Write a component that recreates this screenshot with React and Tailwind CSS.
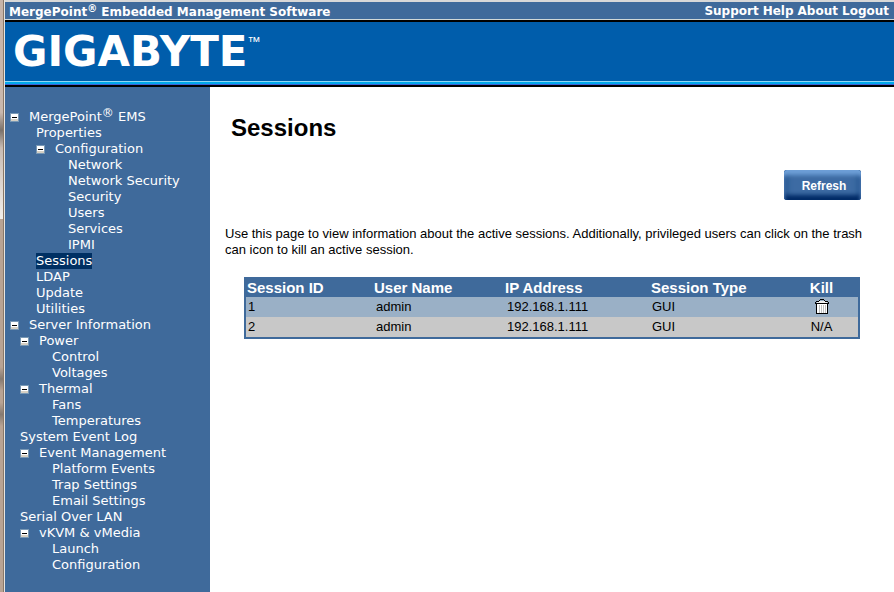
import { clsx } from 'clsx';

const topLinks = ['Support', 'Help', 'About', 'Logout'];

const reg = <sup className="relative -top-1 text-[12px] leading-none align-baseline">®</sup>;

// indent is the padding class for the row's depth in the tree
const menu = [
  { label: <>MergePoint{reg} EMS</>, indent: 'pl-[5px]', open: true },
  { label: 'Properties', indent: 'pl-[31px]' },
  { label: 'Configuration', indent: 'pl-[31px]', open: true },
  { label: 'Network', indent: 'pl-[63px]' },
  { label: 'Network Security', indent: 'pl-[63px]' },
  { label: 'Security', indent: 'pl-[63px]' },
  { label: 'Users', indent: 'pl-[63px]' },
  { label: 'Services', indent: 'pl-[63px]' },
  { label: 'IPMI', indent: 'pl-[63px]' },
  { label: 'Sessions', indent: 'pl-[31px]', active: true },
  { label: 'LDAP', indent: 'pl-[31px]' },
  { label: 'Update', indent: 'pl-[31px]' },
  { label: 'Utilities', indent: 'pl-[31px]' },
  { label: 'Server Information', indent: 'pl-[5px]', open: true },
  { label: 'Power', indent: 'pl-[15px]', open: true },
  { label: 'Control', indent: 'pl-[47px]' },
  { label: 'Voltages', indent: 'pl-[47px]' },
  { label: 'Thermal', indent: 'pl-[15px]', open: true },
  { label: 'Fans', indent: 'pl-[47px]' },
  { label: 'Temperatures', indent: 'pl-[47px]' },
  { label: 'System Event Log', indent: 'pl-[15px]' },
  { label: 'Event Management', indent: 'pl-[15px]', open: true },
  { label: 'Platform Events', indent: 'pl-[47px]' },
  { label: 'Trap Settings', indent: 'pl-[47px]' },
  { label: 'Email Settings', indent: 'pl-[47px]' },
  { label: 'Serial Over LAN', indent: 'pl-[15px]' },
  { label: 'vKVM & vMedia', indent: 'pl-[15px]', open: true },
  { label: 'Launch', indent: 'pl-[47px]' },
  { label: 'Configuration', indent: 'pl-[47px]' },
];

const sessions = [
  { id: 1, user: 'admin', ip: '192.168.1.111', type: 'GUI', canKill: true },
  { id: 2, user: 'admin', ip: '192.168.1.111', type: 'GUI', canKill: false },
];

function Toggle() {
  return (
    <button aria-label="Collapse" className="block shrink-0 mr-[10px]">
      <svg width="9" height="9" viewBox="0 0 9 9" shapeRendering="crispEdges">
        <rect width="9" height="9" fill="#7898b5" />
        <rect x="1" y="1" width="7" height="7" fill="#fff" />
        <path d="M1 6h7v2H1z" fill="#d6d0c4" />
        <path d="M2 4h5v1H2z" fill="#000" />
      </svg>
    </button>
  );
}

function TrashIcon() {
  return (
    <svg width="16" height="16" viewBox="0 0 16 16" shapeRendering="crispEdges">
      <path d="M2 5h12v10H2z" fill="#fff" />
      <path d="M5 6h1v8H5zM7 6h1v8H7zM9 6h1v8H9zM11 6h1v8h-1z" fill="#c0c0c0" />
      <path d="M3 2h10v2H3z" fill="#f0f0f0" />
      <path
        d="M6 0h4v1H6zM5 1h1v1H5zM10 1h1v1h-1zM2 2h3v1H2zM11 2h3v1h-3zM1 3h1v1H1zM14 3h1v1h-1zM1 4h14v1H1zM2 5h1v9H2zM13 5h1v9h-1zM2 14h12v1H2z"
        fill="#000"
      />
    </svg>
  );
}

function Header() {
  return (
    <header>
      <div className="flex h-[20px] items-center justify-between border-t-2 border-b border-t-[#d8d8d8] border-b-[#d0d8d8] bg-[#3f6a9b] pl-1 pr-[5px] font-['DejaVu_Sans',sans-serif] text-xs leading-4 font-bold whitespace-nowrap text-white">
        <div className="pt-[3px]">
          MergePoint<sup className="relative -top-1 text-[10px] leading-none align-baseline">®</sup> Embedded Management Software
        </div>
        <nav className="flex gap-1">
          {topLinks.map(link => (
            <a key={link} href="#">{link}</a>
          ))}
        </nav>
      </div>
      <div className="flex h-[61px] items-start border-t-2 border-black bg-[#005dab] pl-2 text-white">
        <span className="mt-[6px] font-['DejaVu_Sans',sans-serif] text-[42px] leading-[48px] font-bold">GIGABYTE</span>
        <span className="mt-[10px] font-['Liberation_Sans',sans-serif] text-[13px]">™</span>
      </div>
      <div className="h-px bg-[#8fd8f4]" />
      <div className="h-[2px] bg-[#00a8ea]" />
      <div className="h-px bg-[#3f62d8]" />
      <div className="h-[2px] bg-black" />
    </header>
  );
}

function Sidebar() {
  return (
    <nav className="w-[205px] shrink-0 bg-[#3f6a9b] pt-[22px] font-['DejaVu_Sans',sans-serif] text-[13px] leading-4 text-white">
      <ul>
        {menu.map((item, i) => (
          <li key={i} className={clsx('flex h-4 items-center whitespace-nowrap', item.indent)}>
            {item.open && <Toggle />}
            <a href="#" className={clsx(item.active && 'bg-[#003063]')}>{item.label}</a>
          </li>
        ))}
      </ul>
    </nav>
  );
}

function SessionsTable() {
  return (
    <table className="w-full table-fixed border-separate border-spacing-0 border-2 border-[#3f6a9b] text-left text-[13px] leading-4">
      <colgroup>
        <col className="w-[127px]" />
        <col className="w-[131px]" />
        <col className="w-[146px]" />
        <col className="w-[139px]" />
        <col />
      </colgroup>
      <thead>
        <tr className="h-[18px] bg-[#3f6a9b] text-[15px] text-white">
          <th className="pl-px">Session ID</th>
          <th className="pl-px">User Name</th>
          <th className="pl-px">IP Address</th>
          <th className="pl-px">Session Type</th>
          <th className="pr-1 text-center">Kill</th>
        </tr>
      </thead>
      <tbody>
        {sessions.map(s => (
          <tr key={s.id} className="h-5 odd:bg-[#9ab0c6] even:bg-[#c8c8c8]">
            <td className="pl-[2px]">{s.id}</td>
            <td className="pl-[3px]">{s.user}</td>
            <td className="pl-[3px]">{s.ip}</td>
            <td className="pl-[2px]">{s.type}</td>
            <td className="pr-1 text-center">
              {s.canKill ? (
                <button aria-label={`Kill session ${s.id}`} className="block mx-auto"><TrashIcon /></button>
              ) : 'N/A'}
            </td>
          </tr>
        ))}
      </tbody>
    </table>
  );
}

export default function App() {
  return (
    <div className="flex min-h-screen bg-white font-['Liberation_Sans',sans-serif] text-black">
      <div className="w-1 shrink-0 border-r border-[#8a7868] bg-[linear-gradient(#c8b4a8,#c8b8ae_19%,#7a726c_22%,#c8bcb4_25%,#f2eeea_37%,#b8a394_37%,#b8a394_62%,#857a72_64%,#b8a394_66%,#b8a394_68%,#857a72_70%,#b8a394_72%)]" />
      <div className="w-px shrink-0 bg-[#e8e4e0]" />
      <div className="flex min-w-0 flex-1 flex-col">
        <Header />
        <div className="flex flex-1">
          <Sidebar />
          <main className="min-w-0 flex-1 pl-[15px] pr-[18px]">
            <h1 className="pt-[26px] pl-[6px] text-2xl leading-[30px] font-bold">Sessions</h1>
            <div className="mt-[27px] flex justify-end pr-[15px]">
              <button className="h-[30px] w-[77px] rounded-[3px] bg-[#3d6ba3] pt-px pl-[3px] text-xs font-bold text-white shadow-[inset_0_5px_4px_#6fa0d8,inset_0_-5px_4px_#002a66,inset_5px_0_4px_#2f5f98,inset_-5px_0_4px_#2f5f98]">
                Refresh
              </button>
            </div>
            <p className="mt-[26px] text-[13px] leading-4">
              Use this page to view information about the active sessions. Additionally, privileged users can click on the trash can icon to kill an active session.
            </p>
            <div className="mt-[19px] pl-[19px] pr-4">
              <SessionsTable />
            </div>
          </main>
        </div>
      </div>
    </div>
  );
}
